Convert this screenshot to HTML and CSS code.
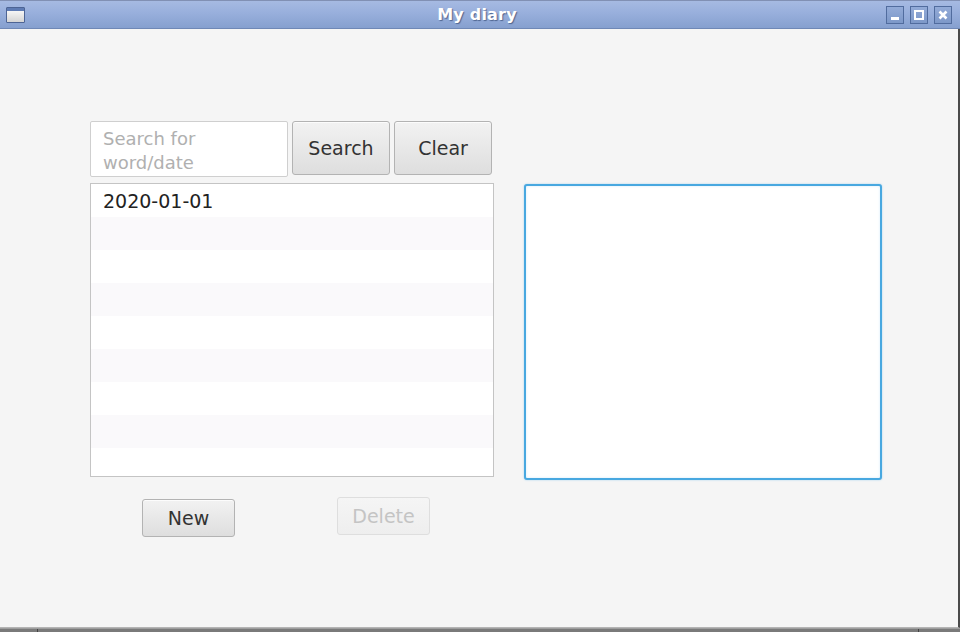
FILE: index.html
```html
<!DOCTYPE html>
<html>
<head>
<meta charset="utf-8">
<title>My diary</title>
<link rel="stylesheet" href="styles.css">
</head>
<body>
<div class="window">
  <div class="titlebar">
    <div class="tb-left"><div class="win-icon"><span class="win-icon-bar"></span></div></div>
    <div class="title">My diary</div>
    <div class="controls">
      <div class="ctl"><svg width="12" height="12" viewBox="0 0 12 12"><rect x="2" y="8" width="8" height="3" fill="#fff"/></svg></div>
      <div class="ctl"><svg width="12" height="12" viewBox="0 0 12 12"><rect x="2" y="2" width="8" height="8" fill="none" stroke="#fff" stroke-width="2"/></svg></div>
      <div class="ctl"><svg width="12" height="12" viewBox="0 0 12 12"><path d="M2.5 2.5 L9.5 9.5 M9.5 2.5 L2.5 9.5" stroke="#fff" stroke-width="2.6"/></svg></div>
    </div>
  </div>
  <div class="content">
    <div class="left">
      <div class="search-row">
        <div class="search-field"><span class="placeholder">Search for word/date</span></div>
        <button class="btn">Search</button>
        <button class="btn">Clear</button>
      </div>
      <div class="list">
        <div class="row">2020-01-01</div>
        <div class="row odd"></div>
        <div class="row"></div>
        <div class="row odd"></div>
        <div class="row"></div>
        <div class="row odd"></div>
        <div class="row"></div>
        <div class="row odd"></div>
        <div class="row"></div>
      </div>
      <div class="actions">
        <button class="btn btn-new">New</button>
        <button class="btn btn-delete" disabled>Delete</button>
      </div>
    </div>
    <div class="right">
      <div class="editor"></div>
    </div>
  </div>
  <div class="taskbar">
    <span class="tick tick-l"></span>
    <span class="tick tick-r"></span>
  </div>
</div>
</body>
</html>
```

FILE: styles.css
```css
html, body {
  margin: 0;
  padding: 0;
  width: 960px;
  height: 632px;
  overflow: hidden;
  background: #f5f5f5;
  font-family: "DejaVu Sans", "Liberation Sans", sans-serif;
}

.window {
  display: flex;
  flex-direction: column;
  width: 960px;
  height: 632px;
}

.titlebar {
  height: 29px;
  flex: none;
  box-sizing: border-box;
  display: grid;
  grid-template-columns: 1fr auto 1fr;
  align-items: center;
  background: linear-gradient(#a6bae2 0%, #98afdc 45%, #86a0cf 100%);
  border-top: 1px solid #8190b4;
  border-bottom: 1px solid #6f88b6;
  padding: 0 8px 0 6px;
}

.tb-left {
  display: flex;
  align-items: center;
}

.win-icon {
  width: 19px;
  height: 16px;
  box-sizing: border-box;
  border: 1px solid #4d6494;
  border-radius: 1px;
  background: linear-gradient(#ffffff, #d4d4d4);
  margin-top: 1px;
}
.win-icon-bar {
  display: block;
  height: 3px;
  background: #5e7bb4;
}

.title {
  text-align: center;
  color: #ffffff;
  font-weight: bold;
  font-size: 16px;
  letter-spacing: 0.2px;
  text-shadow: 1px 1px 1px #4f6590;
  margin-left: -4px;
}

.controls {
  display: flex;
  gap: 6px;
  justify-content: flex-end;
}
.ctl {
  width: 18px;
  height: 18px;
  box-sizing: border-box;
  border: 1px solid #516c9e;
  background: linear-gradient(#93abd8, #7d98c8);
  display: flex;
  align-items: center;
  justify-content: center;
}

.content {
  flex: 1;
  background: #f5f5f5;
  border-right: 2px solid #4a4a4a;
  border-bottom: 1px solid #b4b4b4;
  display: flex;
  padding: 92px 0 0 90px;
  box-sizing: border-box;
}

.left {
  width: 404px;
  display: flex;
  flex-direction: column;
}

.search-row {
  display: flex;
  gap: 4px;
  align-items: flex-start;
}

.search-field {
  width: 198px;
  height: 56px;
  box-sizing: border-box;
  background: #ffffff;
  border: 1px solid #cfcfcf;
  border-radius: 2px;
  padding: 5px 12px;
  font-size: 18px;
  line-height: 24px;
  color: #b0b0b0;
}

.btn {
  font-family: "DejaVu Sans", "Liberation Sans", sans-serif;
  font-size: 19px;
  color: #333333;
  background: linear-gradient(#f2f2f2, #dedede);
  border: 1px solid #b3b3b3;
  border-radius: 3px;
  box-shadow: inset 0 1px 0 #fcfcfc;
  width: 98px;
  height: 54px;
  padding: 0;
}

.list {
  margin-top: 6px;
  height: 294px;
  box-sizing: border-box;
  border: 1px solid #c4c4c4;
  background: #ffffff;
  overflow: hidden;
}
.row {
  height: 33px;
  box-sizing: border-box;
  padding-left: 12px;
  font-size: 19px;
  line-height: 34px;
  color: #222222;
  background: #ffffff;
}
.row.odd {
  background: #faf9fb;
}

.actions {
  display: flex;
  align-items: flex-start;
  margin-top: 20px;
  padding-left: 52px;
}
.btn-new {
  width: 93px;
  height: 38px;
  margin-top: 2px;
}
.btn-delete {
  width: 93px;
  height: 38px;
  margin-left: 102px;
  color: #c4c4c4;
  background: linear-gradient(#f5f5f5, #eeeeee);
  border-color: #dedede;
  box-shadow: none;
}

.right {
  margin-left: 30px;
  padding-top: 63px;
}
.editor {
  width: 358px;
  height: 296px;
  box-sizing: border-box;
  background: #ffffff;
  border: 2px solid #48a8e0;
  border-radius: 3px;
  box-shadow: 0 0 2px #9fd0f0, inset 0 0 3px #d8ecfa;
}

.taskbar {
  height: 3px;
  flex: none;
  background: #7a7a7a;
  border-top: 1px solid #9e9e9e;
  position: relative;
}
.tick {
  position: absolute;
  top: 0;
  width: 1px;
  height: 3px;
  background: #444;
}
.tick-l { left: 37px; }
.tick-r { left: 918px; }
```
